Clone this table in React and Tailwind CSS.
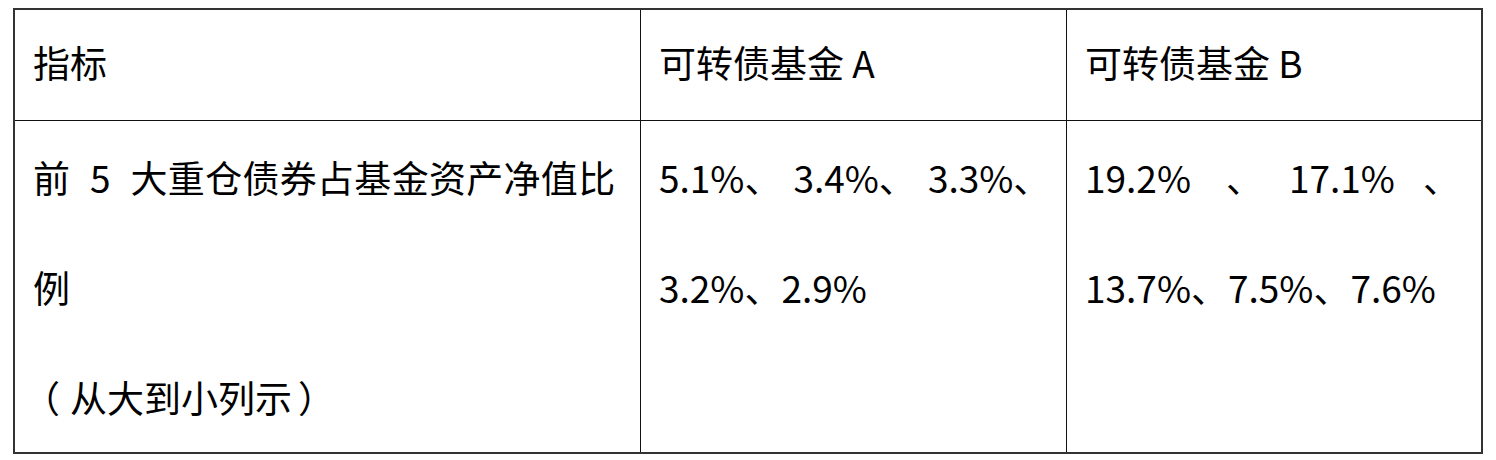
const HEADERS = ['指标', '可转债基金 A', '可转债基金 B'];

const Cell = ({ children, className = '' }) => (
  <div className={`min-w-0 px-[18px] ${className}`}>{children}</div>
);

export default function App() {
  return (
    <div
      className="min-h-[460px] bg-white pt-[8px] pl-[13px] text-black"
      style={{ fontFamily: '"Noto Sans CJK SC", "Noto Sans", sans-serif' }}
      lang="zh-CN"
    >
      <div className="grid w-[1470px] grid-cols-[625px_426px_minmax(0,1fr)] overflow-hidden border-2 border-[#333] text-[37px] leading-[110px]">
        {HEADERS.map((label, index) => (
          <Cell
            key={label}
            className={`h-[111px] border-b border-[#111] leading-[104px] ${index > 0 ? 'border-l' : ''}`}
          >
            {label}
          </Cell>
        ))}

        <Cell className="pt-[1px]">
          <div className="flex whitespace-nowrap">
            <span>前</span>
            <span className="ml-[20px]">5</span>
            <span className="ml-[20px] tracking-[0.3px]">大重仓债券占基金资产净值比</span>
          </div>
          <div>例</div>
          <div className="whitespace-nowrap">
            <span className="-ml-[10px] mr-[10px]">（</span>
            <span>从大到小列示</span>
            <span className="ml-[6px]">）</span>
          </div>
        </Cell>

        <Cell className="border-l border-[#111] pt-[1px]">
          <div className="flex whitespace-nowrap">
            <span>5.1%、</span>
            <span className="ml-[12px]">3.4%、</span>
            <span className="ml-[12px]">3.3%、</span>
          </div>
          <div>3.2%、2.9%</div>
        </Cell>

        <Cell className="border-l border-[#111] pt-[1px]">
          <div className="flex whitespace-nowrap">
            <span>19.2%</span>
            <span className="ml-[35px]">、</span>
            <span className="ml-[26px]">17.1%</span>
            <span className="ml-[28px]">、</span>
          </div>
          <div className="whitespace-nowrap">13.7%、7.5%、7.6%</div>
        </Cell>
      </div>
    </div>
  );
}
